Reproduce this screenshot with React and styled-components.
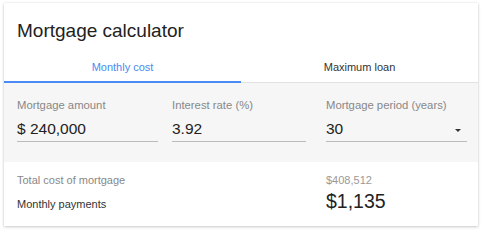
import styled, { createGlobalStyle } from "styled-components";

const GlobalStyle = createGlobalStyle`
  html, body {
    margin: 0;
    padding: 0;
    background: #ffffff;
    font-family: "Liberation Sans", Arial, sans-serif;
  }
`;

const App = () => {
  return (
    <>
      <GlobalStyle />
      <Page>
        <Card>
          <Title>Mortgage calculator</Title>
          <Tabs>
            <Tab active>Monthly cost</Tab>
            <Tab>Maximum loan</Tab>
          </Tabs>
          <Inputs>
            <Field width={141}>
              <Label>Mortgage amount</Label>
              <Value>$ 240,000</Value>
            </Field>
            <Field width={134}>
              <Label>Interest rate (%)</Label>
              <Value>3.92</Value>
            </Field>
            <Field width={141} push>
              <Label>Mortgage period (years)</Label>
              <Value>
                30
                <Caret />
              </Value>
            </Field>
          </Inputs>
          <Results>
            <ResultRow>
              <ResultLabel>Total cost of mortgage</ResultLabel>
              <ResultValue>$408,512</ResultValue>
            </ResultRow>
            <ResultRow>
              <ResultLabel dark>Monthly payments</ResultLabel>
              <ResultValue big>$1,135</ResultValue>
            </ResultRow>
          </Results>
        </Card>
      </Page>
    </>
  );
};
export default App;

const Page = styled.div`
  width: 485px;
  height: 232px;
  padding: 3px 0 0 4px;
  box-sizing: border-box;
`;

const Card = styled.div`
  width: 474px;
  height: 223px;
  background: #fff;
  box-shadow: 0 1px 3px rgba(0, 0, 0, 0.2), 0 0 1px rgba(0, 0, 0, 0.12);
  display: flex;
  flex-direction: column;
`;

const Title = styled.h1`
  margin: 0;
  padding: 17px 0 0 13px;
  height: 47px;
  box-sizing: border-box;
  font-size: 19px;
  font-weight: 400;
  color: #222;
`;

const Tabs = styled.div`
  display: flex;
  height: 32px;
  border-bottom: 1px solid #e2e2e2;
`;

const Tab = styled.div`
  flex: 1;
  display: flex;
  align-items: center;
  justify-content: center;
  padding-top: 3px;
  font-size: 11px;
  color: ${({ active }) => (active ? "#4a8af4" : "#333")};
  border-bottom: 2px solid ${({ active }) => (active ? "#4a8af4" : "transparent")};
  margin-bottom: -1px;
`;

const Inputs = styled.div`
  background: #f6f6f6;
  height: 79px;
  display: flex;
  gap: 14px;
  padding: 16px 0 0 13px;
  box-sizing: border-box;
`;

const Field = styled.div`
  width: ${({ width }) => width}px;
  margin-left: ${({ push }) => (push ? "6px" : "0")};
  display: flex;
  flex-direction: column;
`;

const Label = styled.div`
  font-size: 11.3px;
  color: #888;
  height: 16px;
`;

const Value = styled.div`
  position: relative;
  font-size: 15.5px;
  color: #222;
  padding: 5px 0 3px;
  border-bottom: 1.5px solid #bbb;
`;

const Caret = styled.span`
  position: absolute;
  right: 6px;
  top: 14px;
  width: 0;
  height: 0;
  border-left: 3.5px solid transparent;
  border-right: 3.5px solid transparent;
  border-top: 3.5px solid #333;
`;

const Results = styled.div`
  flex: 1;
  padding: 12px 0 0 13px;
  display: flex;
  flex-direction: column;
  gap: 4px;
`;

const ResultRow = styled.div`
  display: flex;
  align-items: baseline;
`;

const ResultLabel = styled.div`
  width: 309px;
  font-size: 11px;
  color: ${({ dark }) => (dark ? "#333" : "#888")};
`;

const ResultValue = styled.div`
  font-size: ${({ big }) => (big ? "19.5px" : "11px")};
  color: ${({ big }) => (big ? "#222" : "#999")};
`;
